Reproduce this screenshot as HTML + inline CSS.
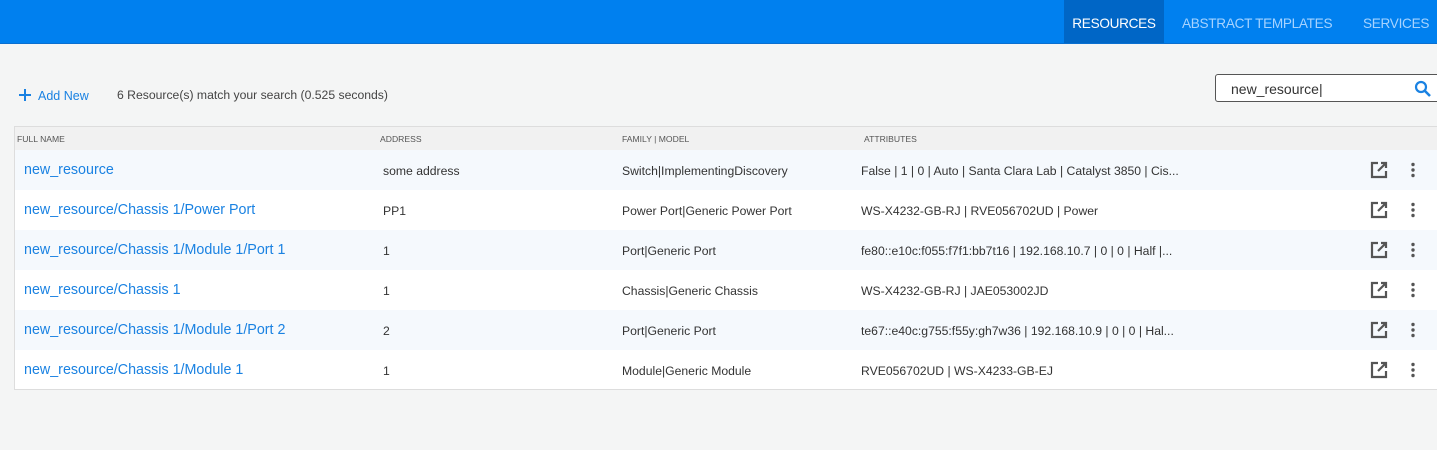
<!DOCTYPE html><html><head><style>
body{margin:0;width:1437px;height:450px;background:#f4f5f5;font-family:"Liberation Sans",sans-serif;position:relative;overflow:hidden}
.nav{position:absolute;left:0;top:0;width:1437px;height:43px;background:#0080ef;border-bottom:1px solid #0a6fd0}
.tab{position:absolute;top:0;height:43px;line-height:48px;font-size:13.6px;letter-spacing:-0.3px;color:#a6d3ff}
.act{background:#0066c6;color:#fff;left:1064px;width:100px;text-align:center}
.add{position:absolute;left:18px;top:88px;font-size:12.5px;color:#1a82e2}
.cnt{position:absolute;left:117px;top:88px;font-size:12.2px;color:#444}
.search{position:absolute;left:1215px;top:74px;width:230px;height:28px;border:1px solid #555;border-radius:3px;background:#fff;box-sizing:border-box}
.search span{position:absolute;left:15px;top:6px;font-size:14px;color:#333}
.tbl{position:absolute;left:14px;top:126px;width:1430px;height:262px;background:#fff;border:1px solid #ddd;border-right:none}
.hd{position:absolute;left:0;top:0;width:100%;height:23px;background:#f1f1f1;font-size:8.6px;color:#555}
.hd span{position:absolute;top:7px}
.row{position:absolute;left:0;width:100%;height:40px;font-size:12.2px;color:#333}
.row.a{background:#f5f9fd}
.row span{position:absolute;top:14px;white-space:nowrap}
.row .n{left:9px;top:12px;font-size:14.3px;color:#1a82e2}
.ic{position:absolute;left:1355px;top:11px}
.dt{position:absolute;left:1396px;top:12px}
</style></head><body>
<div class="nav">
<div class="tab act">RESOURCES</div>
<div class="tab" style="left:1182px">ABSTRACT TEMPLATES</div>
<div class="tab" style="left:1363px">SERVICES</div>
</div>
<div class="add"><svg width="14" height="14" style="vertical-align:-2px;margin-right:6px"><path d="M7 1V13M1 7H13" stroke="#1a82e2" stroke-width="2"/></svg>Add New</div>
<div class="cnt">6 Resource(s) match your search (0.525 seconds)</div>
<div class="search"><span>new_resource|</span><svg width="18" height="18" style="position:absolute;left:198px;top:5px"><circle cx="7" cy="7" r="5" stroke="#1a82e2" stroke-width="2.2" fill="none"/><path d="M11 11L16 16" stroke="#1a82e2" stroke-width="2.6"/></svg></div>
<div class="tbl">
<div class="hd"><span style="left:2px">FULL NAME</span><span style="left:365px">ADDRESS</span><span style="left:607px">FAMILY | MODEL</span><span style="left:849px">ATTRIBUTES</span></div>
<div class="row a" style="top:23px"><span class="n">new_resource</span><span style="left:368px">some address</span><span style="left:607px">Switch|ImplementingDiscovery</span><span style="left:846px">False | 1 | 0 | Auto | Santa Clara Lab | Catalyst 3850 | Cis...</span></div>
<div class="row" style="top:63px"><span class="n">new_resource/Chassis 1/Power Port</span><span style="left:368px">PP1</span><span style="left:607px">Power Port|Generic Power Port</span><span style="left:846px">WS-X4232-GB-RJ | RVE056702UD | Power</span></div>
<div class="row a" style="top:103px"><span class="n">new_resource/Chassis 1/Module 1/Port 1</span><span style="left:368px">1</span><span style="left:607px">Port|Generic Port</span><span style="left:846px">fe80::e10c:f055:f7f1:bb7t16 | 192.168.10.7 | 0 | 0 | Half |...</span></div>
<div class="row" style="top:143px"><span class="n">new_resource/Chassis 1</span><span style="left:368px">1</span><span style="left:607px">Chassis|Generic Chassis</span><span style="left:846px">WS-X4232-GB-RJ | JAE053002JD</span></div>
<div class="row a" style="top:183px"><span class="n">new_resource/Chassis 1/Module 1/Port 2</span><span style="left:368px">2</span><span style="left:607px">Port|Generic Port</span><span style="left:846px">te67::e40c:g755:f55y:gh7w36 | 192.168.10.9 | 0 | 0 | Hal...</span></div>
<div class="row" style="top:223px"><span class="n">new_resource/Chassis 1/Module 1</span><span style="left:368px">1</span><span style="left:607px">Module|Generic Module</span><span style="left:846px">RVE056702UD | WS-X4233-GB-EJ</span></div>
</div>
<script>
document.querySelectorAll('.row').forEach(r=>{r.insertAdjacentHTML('beforeend','<svg class="ic" width="18" height="18"><path d="M8 2H2V16H16V10" stroke="#555" stroke-width="2.2" fill="none"/><path d="M8 10L16 2M11 2H16V7" stroke="#555" stroke-width="2.2" fill="none"/></svg><svg class="dt" width="4" height="16"><circle cx="2" cy="2.5" r="1.7" fill="#555"/><circle cx="2" cy="8" r="1.7" fill="#555"/><circle cx="2" cy="13.5" r="1.7" fill="#555"/></svg>')});
</script>
</body></html>
